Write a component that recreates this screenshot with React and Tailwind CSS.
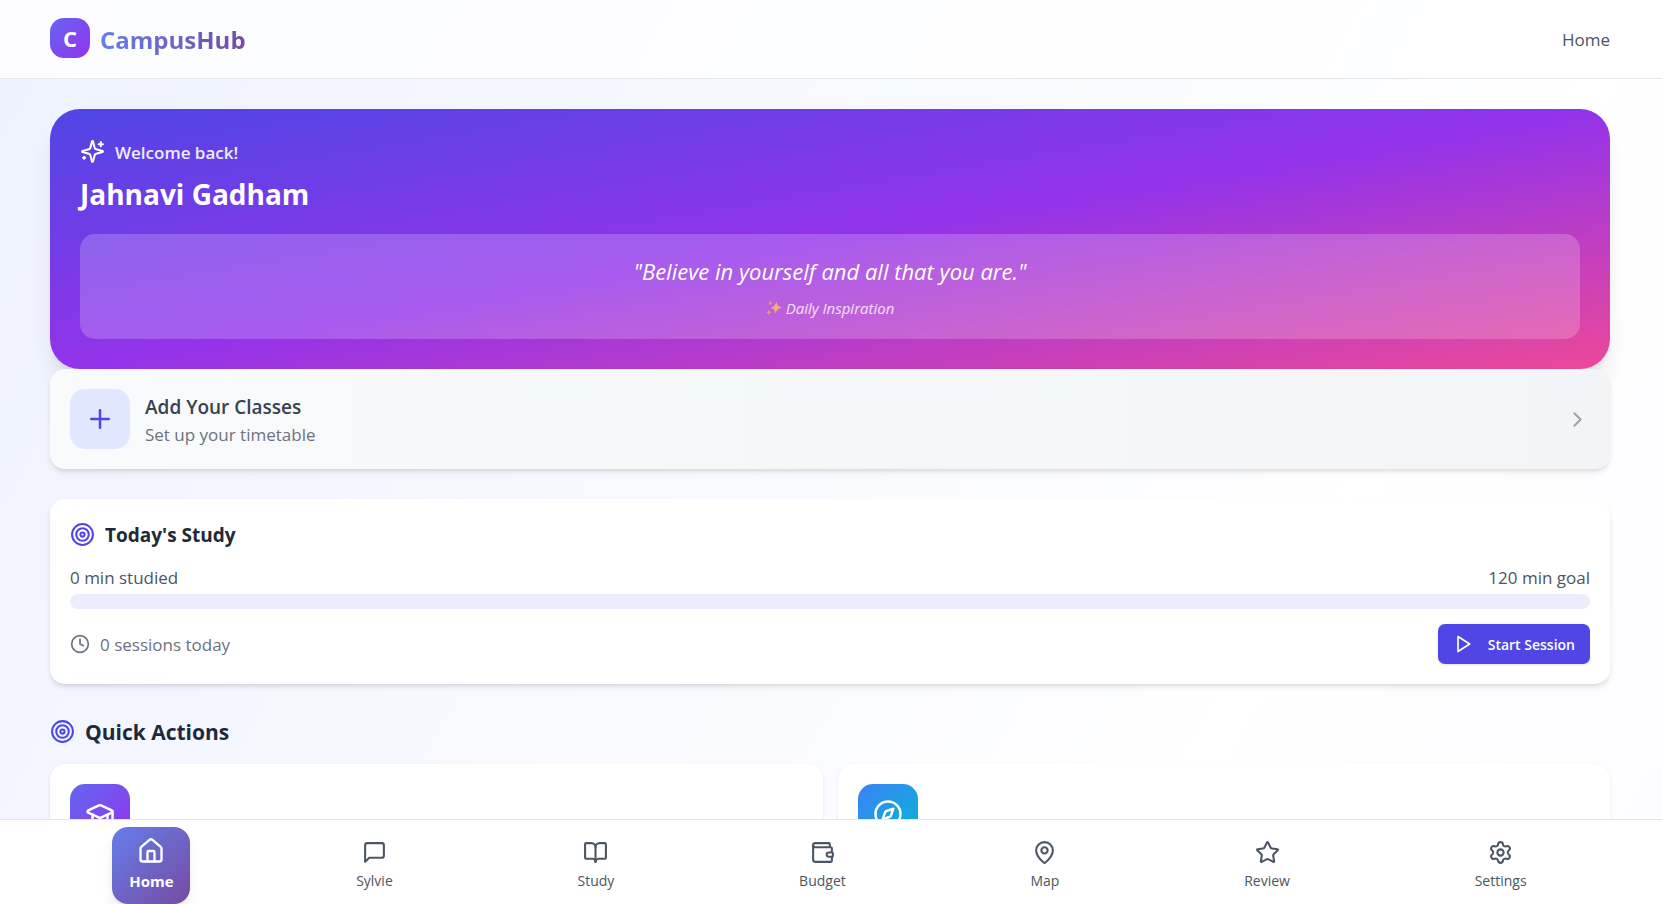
import React from 'react';
import {
  BookOpen,
  ChevronRight,
  Clock,
  Compass,
  GraduationCap,
  House,
  MapPin,
  Plus,
  Settings,
  Star,
  Target,
  Wallet,
} from 'lucide-react';

// --- Icons drawn by hand ---
const StrokeIcon = ({ size, children }) => (
  <svg
    width={size}
    height={size}
    viewBox="0 0 24 24"
    fill="none"
    stroke="currentColor"
    strokeWidth="2"
    strokeLinecap="round"
    strokeLinejoin="round"
    aria-hidden="true"
  >
    {children}
  </svg>
);

const SparklesIcon = ({ size }) => (
  <StrokeIcon size={size}>
    <path d="M9.937 15.5A2 2 0 0 0 8.5 14.063l-6.135-1.582a.5.5 0 0 1 0-.962L8.5 9.936A2 2 0 0 0 9.937 8.5l1.582-6.135a.5.5 0 0 1 .963 0L14.063 8.5A2 2 0 0 0 15.5 9.937l6.135 1.581a.5.5 0 0 1 0 .964L15.5 14.063a2 2 0 0 0-1.437 1.437l-1.582 6.135a.5.5 0 0 1-.963 0z" />
    <path d="M20 3v4M22 5h-4M4 17v2M5 18H3" />
  </StrokeIcon>
);

const ChatIcon = ({ size }) => (
  <StrokeIcon size={size}>
    <path d="M21 15a2 2 0 0 1-2 2H7l-4 4V5a2 2 0 0 1 2-2h14a2 2 0 0 1 2 2z" />
  </StrokeIcon>
);

const PlayIcon = ({ size }) => (
  <StrokeIcon size={size}>
    <polygon points="6 3 20 12 6 21 6 3" />
  </StrokeIcon>
);

const SparkleEmoji = () => (
  <svg viewBox="0 0 16 16" className="h-4 w-4" aria-hidden="true">
    <defs>
      <linearGradient id="sparkle" x1="0" y1="1" x2="1" y2="0">
        <stop offset="0" stopColor="#f58a8a" />
        <stop offset="1" stopColor="#f5c26b" />
      </linearGradient>
    </defs>
    <path
      fill="url(#sparkle)"
      d="M10.500 1c.5 4 1.500 5.300 5.500 6.500-4 1.200-5.300 2.500-6.500 6.500C9 10.300 8 9 4.500 8 8.300 6.500 9.500 5 10.500 1ZM4.500 1c.2 1.300.6 1.800 1.800 2.100-1.300.4-1.700.8-2 2.100-.3-1.300-.7-1.700-1.800-2C3.800 2.800 4.200 2.300 4.500 1ZM3 9.500c.3 1.700.9 2.300 2.700 2.800-1.800.5-2.500 1.100-3 2.900-.3-1.700-.9-2.400-2.600-2.800C1.900 11.900 2.500 11.200 3 9.500Z"
    />
  </svg>
);

const navItems = [
  { label: 'Home', icon: House, active: true },
  { label: 'Sylvie', icon: ChatIcon },
  { label: 'Study', icon: BookOpen },
  { label: 'Budget', icon: Wallet },
  { label: 'Map', icon: MapPin },
  { label: 'Review', icon: Star },
  { label: 'Settings', icon: Settings },
];

const quickActions = [
  { id: 'classes', icon: GraduationCap, tile: 'from-[#6366f1] to-[#9333ea]' },
  { id: 'explore', icon: Compass, tile: 'from-[#3b82f6] to-[#06b6d4]' },
];

const Header = () => (
  <header className="flex shrink-0 items-center justify-between border-b border-[#e5e7eb] bg-white/80 pt-[18px] pr-[52px] pb-5 pl-[50px]">
    <div className="flex items-center gap-[10px]">
      <div className="flex h-10 w-10 items-center justify-center rounded-[14px] bg-linear-to-br/srgb from-[#6366f1] to-[#9333ea] text-[22px] font-bold text-white">
        C
      </div>
      <span className="bg-linear-to-r/srgb from-[#667eea] to-[#764ba2] bg-clip-text pt-1 text-2xl font-bold text-transparent">
        CampusHub
      </span>
    </div>
    <a href="#home" className="pt-1 text-[17px] text-[#4b5563]">Home</a>
  </header>
);

const WelcomeCard = () => (
  <section className="rounded-[30px] bg-linear-to-br/srgb from-[#4f46e5] via-[#9333ea] to-[#ec4899] p-[30px] text-white shadow-[0_20px_25px_-5px_rgba(0,0,0,0.1),0_8px_10px_-6px_rgba(0,0,0,0.1)]">
    <div className="flex h-[25px] items-center gap-[10px]">
      <SparklesIcon size={25} />
      <span className="pt-[2px] text-[17px] font-semibold text-white/90">Welcome back!</span>
    </div>
    <h1 className="mt-[10px] text-[28px] leading-[40px] font-bold">Jahnavi Gadham</h1>
    <div className="mt-5 flex h-[105px] flex-col items-center justify-center gap-2 rounded-[15px] bg-white/20 pt-1 italic">
      <p className="text-[22px] leading-[30px] font-medium">"Believe in yourself and all that you are."</p>
      <p className="flex items-center gap-1 text-[15px] leading-7 text-white/80">
        <SparkleEmoji />
        Daily Inspiration
      </p>
    </div>
  </section>
);

const AddClassesCard = () => (
  <button
    type="button"
    className="flex w-full items-center gap-[15px] rounded-[15px] bg-linear-to-r/srgb from-[#f9fafb] to-[#f3f4f6] p-5 text-left shadow-[0_4px_6px_-1px_rgba(0,0,0,0.1),0_2px_4px_-2px_rgba(0,0,0,0.1)]"
  >
    <span className="flex h-[60px] w-[60px] items-center justify-center rounded-[15px] bg-[#e0e7ff] text-[#4f46e5]">
      <Plus size={30} />
    </span>
    <span className="flex flex-1 flex-col pt-1">
      <span className="text-[19px] leading-7 font-semibold text-[#374151]">Add Your Classes</span>
      <span className="text-[17px] leading-7 text-[#6b7280]">Set up your timetable</span>
    </span>
    <ChevronRight size={25} className="text-[#9ca3af]" />
  </button>
);

const StudyCard = () => (
  <section className="mt-[30px] rounded-[15px] bg-white p-5 shadow-[0_4px_6px_-1px_rgba(0,0,0,0.1),0_2px_4px_-2px_rgba(0,0,0,0.1)]">
    <div className="flex h-[30px] items-center gap-[10px]">
      <Target size={25} className="text-[#4f46e5]" />
      <h2 className="pt-[2px] text-[19px] font-bold text-[#1f2937]">Today's Study</h2>
    </div>
    <div className="mt-[15px] flex justify-between pb-[2px] text-[17px] leading-7 text-[#4b5563]">
      <span>0 min studied</span>
      <span>120 min goal</span>
    </div>
    <div
      role="progressbar"
      aria-label="Study progress"
      aria-valuenow={0}
      aria-valuemax={120}
      className="h-[15px] rounded-full bg-[#ebedfb]"
    />
    <div className="mt-[15px] flex items-center justify-between">
      <div className="flex items-center gap-[10px] text-[17px] text-[#6b7280]">
        <Clock size={20} />
        <span className="pt-[2px]">0 sessions today</span>
      </div>
      <button
        type="button"
        className="flex h-10 items-center gap-[15px] rounded-[7px] bg-[#4f46e5] px-[15px] text-[14px] font-semibold text-white shadow-sm"
      >
        <PlayIcon size={20} />
        Start Session
      </button>
    </div>
  </section>
);

const QuickActions = () => (
  <section className="mt-[30px]">
    <div className="flex h-[35px] items-center gap-[10px]">
      <Target size={25} className="text-[#4f46e5]" />
      <h2 className="pt-[2px] text-[21px] font-bold text-[#1f2937]">Quick Actions</h2>
    </div>
    <div className="mt-[15px] grid grid-cols-2 gap-[15px]">
      {quickActions.map(({ id, icon: Icon, tile }) => (
        <button key={id} type="button" className="rounded-[15px] bg-white p-5 shadow-[0_1px_3px_rgba(0,0,0,0.1)]">
          <span className={`flex h-[60px] w-[60px] items-center justify-center rounded-[15px] bg-linear-to-br/srgb text-white ${tile}`}>
            <Icon size={30} />
          </span>
        </button>
      ))}
    </div>
  </section>
);

const BottomNav = () => (
  <nav className="flex h-[85px] shrink-0 items-center justify-around border-t border-[#e5e7eb] bg-white pt-[6px] pr-[43px] pl-[39px]">
    {navItems.map(({ label, icon: Icon, active }) =>
      active ? (
        <a
          key={label}
          href="#home"
          aria-current="page"
          className="-mx-1 flex h-[77px] w-[78px] flex-col items-center justify-center gap-1 rounded-[16px] bg-linear-to-br/srgb from-[#667eea] to-[#764ba2] text-[15px] leading-6 font-bold text-white shadow-lg"
        >
          <Icon size={28} />
          {label}
        </a>
      ) : (
        <a
          key={label}
          href={`#${label.toLowerCase()}`}
          className="flex flex-col items-center gap-1 px-[15px] pt-[2px] text-[14px] leading-6 font-medium text-[#4b5563]"
        >
          <Icon size={25} />
          {label}
        </a>
      )
    )}
  </nav>
);

const App = () => {
  return (
    <div className="flex h-screen flex-col bg-[linear-gradient(120deg,#eef2ff,#ffffff_75%,#fdfcff)] font-['Open_Sans','Noto_Sans',sans-serif]">
      <Header />
      <main className="min-h-0 flex-1 overflow-y-auto py-[30px] pr-[52px] pl-[50px] [scrollbar-width:none]">
        <WelcomeCard />
        <AddClassesCard />
        <StudyCard />
        <QuickActions />
      </main>
      <BottomNav />
    </div>
  );
};

export default App;
